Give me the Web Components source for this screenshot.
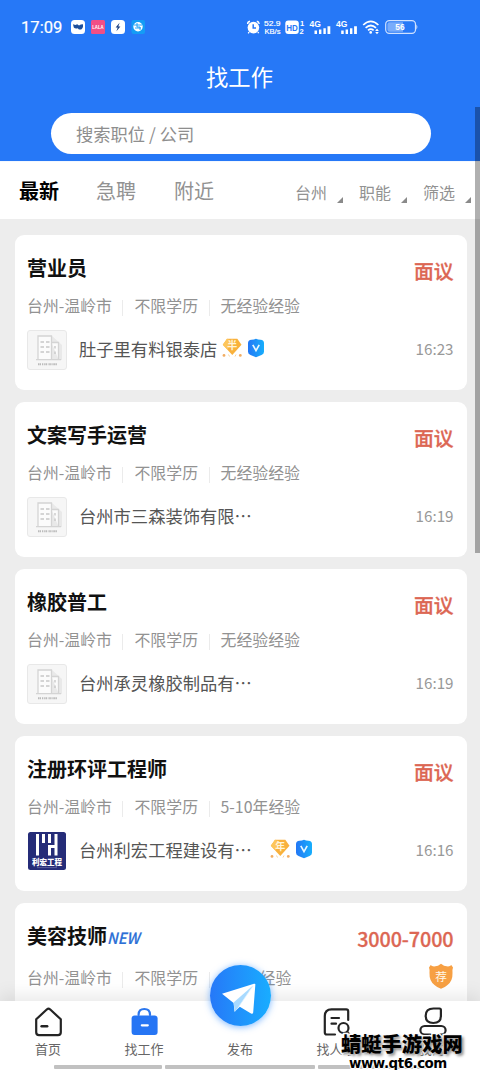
<!DOCTYPE html>
<html lang="zh-CN">
<head>
<meta charset="utf-8">
<title>找工作</title>
<style>
html,body{margin:0;height:1070px;overflow:hidden}
body{width:480px;font-family:"Noto Sans CJK SC",sans-serif;background:#ededed}
</style>
</head>
<body>
<job-app></job-app>
<script>
const define=(name,html,setup)=>customElements.define(name,class extends HTMLElement{
  connectedCallback(){
    if(this.shadowRoot)return;
    const t=document.createElement('template');
    t.innerHTML='<style>*{box-sizing:border-box}svg{display:block}</style>'+html;
    this.attachShadow({mode:'open'}).append(t.content.cloneNode(true));
    if(setup)setup(this,this.shadowRoot);
  }
});

define('status-bar',`
<style>
:host{display:flex;height:54px;padding:0 62px 0 21px;align-items:center;color:#fff}
.time{font:16.6px/20px Roboto,sans-serif;width:50px;white-space:nowrap;-webkit-text-stroke:.2px #fff;padding-top:1px}
.rest{flex:1}
svg{overflow:visible}
text{font-family:"Liberation Sans",sans-serif;font-weight:bold}
</style>
<span class="time">17:09</span>
<svg width="75" height="14" viewBox="0 0 75 14">
 <rect width="14" height="14" rx="3.5" fill="#fff"/>
 <path d="M2 4.2L4.4 5L6.2 4.2L8 5.6L9.8 4.4L12 4.2Q12.4 6.8 11.2 8.4Q9.8 10.2 7.6 9.3L6.8 8.2Q4 8.8 2.8 7.4Z" fill="#1d4f9c"/>
 <rect x="20" width="14" height="14" rx="1.5" fill="#f14f86"/>
 <text x="21.2" y="9" font-size="6.2" fill="#fff" textLength="11.5" lengthAdjust="spacingAndGlyphs">LALA</text>
 <rect x="40" width="14" height="14" rx="3.5" fill="#fff"/>
 <path d="M48.6 2.8L44.6 7.6H46.7L45.4 11.2L49.4 6.4H47.3Z" fill="#173c80"/>
 <rect x="60.5" width="13.5" height="14" rx="2" fill="#149cf5"/>
 <circle cx="67" cy="6.8" r="4.7" fill="#fff"/>
 <path d="M63 5H71M64 8H70M66 3V7H69V10" fill="none" stroke="#149cf5" stroke-width=".9"/>
</svg>
<span class="rest"></span>
<svg width="171" height="16" viewBox="247 19 171 16" fill="#fff">
 <circle cx="253.4" cy="27.6" r="5.8"/><path d="M247.6 24Q247.7 21.7 250 21.3M256.8 21.3Q259 21.7 259.2 24M249 32L248.3 33.3M258 32L258.6 33.3" stroke="#fff" stroke-width="1.4" fill="none"/>
 <path d="M253.2 24.3V28.1H256" stroke="#2678f7" stroke-width="1.5" fill="none"/>
 <text x="264" y="26.3" font-size="8" style="font-weight:400" stroke="#fff" stroke-width=".2" textLength="16.5" lengthAdjust="spacingAndGlyphs">52.9</text>
 <text x="264.5" y="33.8" font-size="7.6" style="font-weight:400" stroke="#fff" stroke-width=".2" textLength="16" lengthAdjust="spacingAndGlyphs">KB/s</text>
 <rect x="285.3" y="20.5" width="13.5" height="13.4" rx="3"/>
 <text x="286.3" y="30.6" font-size="9" fill="#2678f7" textLength="11.5" lengthAdjust="spacingAndGlyphs">HD</text>
 <text x="300" y="26.3" font-size="7.5">1</text><text x="299.4" y="34" font-size="7.5">2</text>
 <text x="309.4" y="27" font-size="8.8" textLength="11.4" lengthAdjust="spacingAndGlyphs">4G</text>
 <path d="M314.5 30.5h2.5v3.5h-2.5zM319 29.6h2.4V34H319zM323.4 28.3h2.4V34h-2.4zM327.5 26.3h2.8V34h-2.8z"/>
 <text x="336" y="27" font-size="8.8" textLength="11.4" lengthAdjust="spacingAndGlyphs">4G</text>
 <path d="M341.2 30.5h2.5v3.5h-2.5zM345.6 29.6h2.4V34h-2.4zM350 28.3h2.4V34H350zM354.1 26.3h2.8V34h-2.8z"/>
 <path d="M363.2 25Q370.8 17.8 378.4 25M365.6 27.8Q370.8 23.2 376 27.8M368 30.4Q370.8 28 373.6 30.4" stroke="#fff" stroke-width="1.7" fill="none"/>
 <circle cx="370.7" cy="32.4" r="1.3"/><path d="M375.2 31L377 28.5L378.8 31ZM375.2 32L377 34.2L378.8 32Z"/>
 <rect x="385.7" y="20.6" width="29.8" height="12.8" rx="3.6" fill="none" stroke="#cfe1ff" stroke-width="1.2"/>
 <path d="M389.5 22.3H403V31.7H389.5Q387.4 31.7 387.4 29.5V24.5Q387.4 22.3 389.5 22.3Z" fill="#79acfb"/>
 <path d="M416.4 24.5Q418.3 27 416.4 29.5Z" fill="#cfe1ff"/>
 <text x="395.3" y="30.1" font-size="8.4" textLength="9.3" lengthAdjust="spacingAndGlyphs">56</text>
</svg>`);

define('page-header',`
<style>
:host{display:block;height:161px;background:#2678f7;color:#fff}
h1{margin:0;height:59px;font-size:22.3px;font-weight:400;line-height:44px;text-align:center;padding-right:1px}
.search{margin:0 49px 0 51px;height:41px;border-radius:21px;background:#fff;color:#8e8e8e;font-size:17.3px;line-height:41px;padding-left:25px;white-space:pre}
</style>
<status-bar></status-bar><h1>找工作</h1><div class="search">搜索职位 / 公司</div>`);

define('filter-tabs',`
<style>
:host{display:flex;height:58px;background:#fff;padding:0 9px 0 19px;color:#929292;font-size:20px;line-height:58px;border-top:1px solid #f3f8ff}
b{color:#000;margin-right:37px}.t{margin-right:38px}.gap{flex:1}
.f{display:flex;font-size:16px;line-height:61px;width:64px}.f:last-child{width:48px;}
i{width:6px;height:6px;margin:35px 0 0 10px;background:#8a8a8a;clip-path:polygon(100% 0,100% 100%,0 100%)}
</style>
<b>最新</b><span class="t">急聘</span><span>附近</span><span class="gap"></span>
<span class="f">台州<i></i></span><span class="f">职能<i></i></span><span class="f">筛选<i></i></span>`,
);

const placeholder=`<svg width="40" height="40" viewBox="0 0 40 40">
<rect x=".5" y=".5" width="39" height="39" rx="2.5" fill="#f6f6f6" stroke="#e8e8e8"/>
<path d="M25 6L35 15V30H25Z" fill="#e9e9e9"/>
<path d="M11 29.5V6H24.5V29.5M24.5 12.5H31.5V29.5M9 29.7H34" fill="#fbfbfb" stroke="#d4d4d4" stroke-width="1.3"/>
<path d="M13.5 12h3.5M19 12h3.5M13.5 17h3.5M19 17h3.5M13.5 22h3.5M19 22h3.5M28 16v2.5M28 21.5v2.5" stroke="#c8c8c8" stroke-width="1.4"/>
<path d="M11 34.2h3M15 34.2h1.5M17.2 34.2h3M21.5 34.2h3M25.4 34.2h4.5" stroke="#bbb" stroke-width="2" stroke-dasharray="1.3 .4"/></svg>`;
const brand=`<svg width="40" height="40" viewBox="0 0 40 40">
<rect x="1" y="1" width="38" height="38" rx="2.5" fill="#252c78"/>
<path d="M9 3h3v21.5H9zM15 3h3v9h-3zM21 3h3v9h-3zM27.5 3h3v21.5h-3zM21 14h7v3h-4v7.5h-3z" fill="#fff"/>
<text x="5" y="34.4" font-size="7.5" font-weight="900" fill="#fff" textLength="30">利宏工程</text>
<path d="M10 36.6h20" stroke="#7b80b0" stroke-width=".6"/></svg>`;

define('member-badges',`
<style>:host{display:flex;gap:6px}</style>
<svg width="20" height="20" viewBox="0 0 20 20"><path d="M5 .8H15.3L19.5 6.8L10.3 17L.8 6.8Z" fill="#f9b13c"/><path d="M.8 6.8L5 .8L10 3L5.5 11.5Z" fill="#fdc65b"/>
<text x="5.2" y="11.2" font-size="10" font-weight="700" fill="#fff4d9"></text><circle cx="2" cy="17.4" r="1.4" fill="#f2ad63"/><circle cx="18.3" cy="17.4" r="1.4" fill="#f2ad63"/><path d="M6.5 16.5l1 2M14 16.5l-1 2" stroke="#f8d59d" stroke-width="1"/></svg>
<svg width="16" height="20" viewBox="0 0 16 20"><defs><linearGradient id="g"><stop stop-color="#2377f5"/><stop offset="1" stop-color="#17aefc"/></linearGradient></defs>
<path d="M8 .8Q10 1.6 12.5 1.8Q16 2 16 5V13.8Q16 16 13.5 17L8 19.2L2.5 17Q0 16 0 13.8V5Q0 2 3.5 1.8Q6 1.6 8 .8Z" fill="url(#g)"/><path d="M4.8 6.8L8 12.6L11.2 6.8" fill="none" stroke="#e8f7ff" stroke-width="1.7"/></svg>`,
(h,r)=>r.querySelector('text').textContent=h.getAttribute('kind'));

define('job-card',`
<style>
:host{display:flex;justify-content:space-between;height:155px;margin-bottom:12px;border-radius:9px;background:#fff;padding:17px 13.5px 0 12px}
.left{display:flex;flex-direction:column}
.right{display:flex;flex-direction:column;align-items:flex-end}
.title{font-size:20px;line-height:31px;height:38px;font-weight:700;color:#111;white-space:nowrap}
.title em{display:inline-block;font:italic 500 15.5px/20px "Noto Sans CJK SC";color:#2c6fd6;margin-left:0;transform:scaleX(.94);transform-origin:0 50%;-webkit-text-stroke:.2px #2c6fd6}
.meta{display:flex;align-items:center;height:32px;font-size:15.9px;line-height:34px;color:#929292;white-space:nowrap}
.meta i{width:1px;height:16px;background:#ebebeb;margin:4px 11px 0 10.5px}
.co{display:flex;align-items:center;height:40px;margin-top:8px;color:#555;font-size:17.3px}
.logo{width:40px;margin-right:12px}.co .n{white-space:nowrap;line-height:40px;margin-top:-2px}
member-badges{margin:-4px 0 0 5px}:host([wide]) member-badges{margin-left:18px}
.pay{font-size:19.8px;font-weight:500;line-height:37px;color:#dc6653;height:78px;-webkit-text-stroke:.3px #dc6653}
.time{font-size:15.2px;line-height:37px;color:#999}
:host([fresh]) .meta{margin-top:4px}
:host([fresh]) .pay{height:43px;letter-spacing:-.1px}
</style>
<div class="left"><div class="title"></div><div class="meta"></div><div class="co"></div></div>
<div class="right"><div class="pay"></div><div class="time"></div></div>`,
(h,r)=>{
  const a=n=>h.getAttribute(n),q=s=>r.querySelector(s);
  q('.title').innerHTML=a('job')+(h.hasAttribute('fresh')?'<em>NEW</em>':'');
  q('.meta').innerHTML=['台州-温岭市','不限学历',a('exp')||'无经验经验'].join('<i></i>');
  q('.pay').textContent=a('pay')||'面议';
  if(h.hasAttribute('fresh')){
    q('.co').remove();
    q('.time').innerHTML='<svg width="26" height="27" viewBox="0 0 26 27"><path d="M13 .8Q15.5 3.3 20 3.4Q22.3 3.4 23.3 2L25 4.5Q24.3 6 24.5 10Q24.8 18 19.5 22Q16.5 24.8 13 25.8Q9.5 24.8 6.5 22Q1.2 18 1.5 10Q1.7 6 1 4.5L2.7 2Q3.7 3.4 6 3.4Q10.5 3.3 13 .8Z" fill="#f7a043"/><text x="7.2" y="17.5" font-size="11.7" fill="#fff8e8">荐</text></svg>';
  }else{
    q('.co').innerHTML='<span class="logo">'+(h.hasAttribute('brand')?brand:placeholder)+'</span><span class="n">'+a('co')+'</span>'+(a('badge')?'<member-badges kind="'+a('badge')+'"></member-badges>':'');
    q('.time').textContent=a('time');
  }
});

define('tab-item',`
<style>
:host{display:flex;flex-direction:column;align-items:center;width:96.3px;padding-top:5px;font-size:13px;line-height:20px;color:#666}
svg{height:32px;width:32px;margin-bottom:1px}
</style><svg viewBox="0 0 32 32" fill="none" stroke="#242424" stroke-width="2.2" stroke-linejoin="round" stroke-linecap="round"></svg><slot></slot>`,
(h,r)=>{r.querySelector('svg').innerHTML={
 home:'<path d="M4.2 13.3L15 3.3Q16.5 2 18 3.3L28.8 13.3V26.3Q28.8 29.1 26 29.1H7Q4.2 29.1 4.2 26.3Z"/><path d="M9.6 20.3h5.6" stroke-width="2.4"/>',
 bag:'<path d="M10.6 9V8.4Q10.8 3 16.3 3Q21.8 3 22 8.4V9" stroke="#2c77ee"/><rect x="3.6" y="9.5" width="26" height="19.5" rx="3" fill="#2675f4" stroke="none"/><path d="M13.8 19.3h6" stroke="#fff" stroke-width="2.2"/>',
 find:'<path d="M15 28.5H6.8Q4.8 28.5 4.8 26.5V10Q4.8 3.3 11.5 3.3H26.2Q28.2 3.3 28.2 5.3V14M11.5 12h7.5M11.5 17.7h4.5"/><circle cx="23.5" cy="22" r="5"/><path d="M27.2 25.8L29.2 28.2"/>',
 me:'<path d="M17.5 2.5H23.5Q24.9 2.5 24.9 3.9V9.8Q24.9 17 17.3 17Q9.7 17 9.7 9.8Q9.7 2.5 17.5 2.5Z"/><rect x="4.4" y="20" width="25.2" height="8.6" rx="4.3"/>',
 none:''}[h.getAttribute('icon')]});

define('tab-bar',`
<style>
:host{display:block;position:absolute;left:0;right:0;top:1001px;height:69px;background:#fff;box-shadow:0 -4px 18px rgba(0,0,0,.1)}
nav{display:flex;height:63px}
.fab{position:absolute;left:210px;top:-36px;width:61px;height:61px;border-radius:50%;background:linear-gradient(90deg,#2678f8,#19adff);box-shadow:0 1px 7px rgba(38,135,255,.6)}
.lines{display:flex;gap:3px;padding:1px 0 0 54px}
.lines i{height:4px;background:#c1c1c1;border-radius:1px}
</style>
<nav><tab-item icon="home">首页</tab-item><tab-item icon="bag">找工作</tab-item><tab-item icon="none">发布</tab-item><tab-item icon="find">找人才</tab-item><tab-item icon="me">我的</tab-item></nav>
<div class="lines"><i style="width:108px"></i><i style="width:150px"></i><i style="width:108px"></i></div>
<div class="fab"><svg width="61" height="61" viewBox="0 0 61 61"><path d="M12 28.7L44 18.8Q45.7 18.4 45.3 20.2L43.2 47.5Q42.8 49.5 41 48.5L29.8 41.8L24.5 46.7L23.6 38Z" fill="#fff"/><path d="M23.6 37.5L43 20.5L29 41.2L24.8 47Z" fill="#a8daff"/><path d="M29 41.2L43 21" stroke="#d9efff" stroke-width=".7"/></svg></div>`);

define('site-mark',`
<style>
:host{position:absolute;left:341px;top:1030px;width:124px;color:#000}
div{white-space:nowrap;paint-order:stroke fill}
.cn{font-size:20.3px;font-weight:900;line-height:26px;-webkit-text-stroke:3px #fff;text-shadow:2px 2px 3px #888}
.en{font:bold 13.4px/14px "DejaVu Sans",sans-serif;-webkit-text-stroke:2px #fff;margin:1px 0 0 8px;letter-spacing:-.45px}
</style><div class="cn">蜻蜓手游戏网</div><div class="en">www.qt6.com</div>`);

define('job-app',`
<style>
:host{display:block;position:relative;width:480px;height:1070px;overflow:hidden;background:#ededed}
main{padding:16px 13px 0 15px}
.bar{position:absolute;left:475px;top:107px;width:5px;height:446px;background:rgba(0,0,0,.31)}
</style>
<page-header></page-header><filter-tabs></filter-tabs>
<main>
<job-card job="营业员" co="肚子里有料银泰店" badge="半" time="16:23"></job-card>
<job-card job="文案写手运营" co="台州市三森装饰有限…" time="16:19"></job-card>
<job-card job="橡胶普工" co="台州承灵橡胶制品有…" time="16:19"></job-card>
<job-card job="注册环评工程师" exp="5-10年经验" co="台州利宏工程建设有…" badge="年" wide brand time="16:16"></job-card>
<job-card job="美容技师" exp="1-3年经验" pay="3000-7000" fresh></job-card>
</main>
<tab-bar></tab-bar><div class="bar"></div><site-mark></site-mark>`);
</script>
</body>
</html>
